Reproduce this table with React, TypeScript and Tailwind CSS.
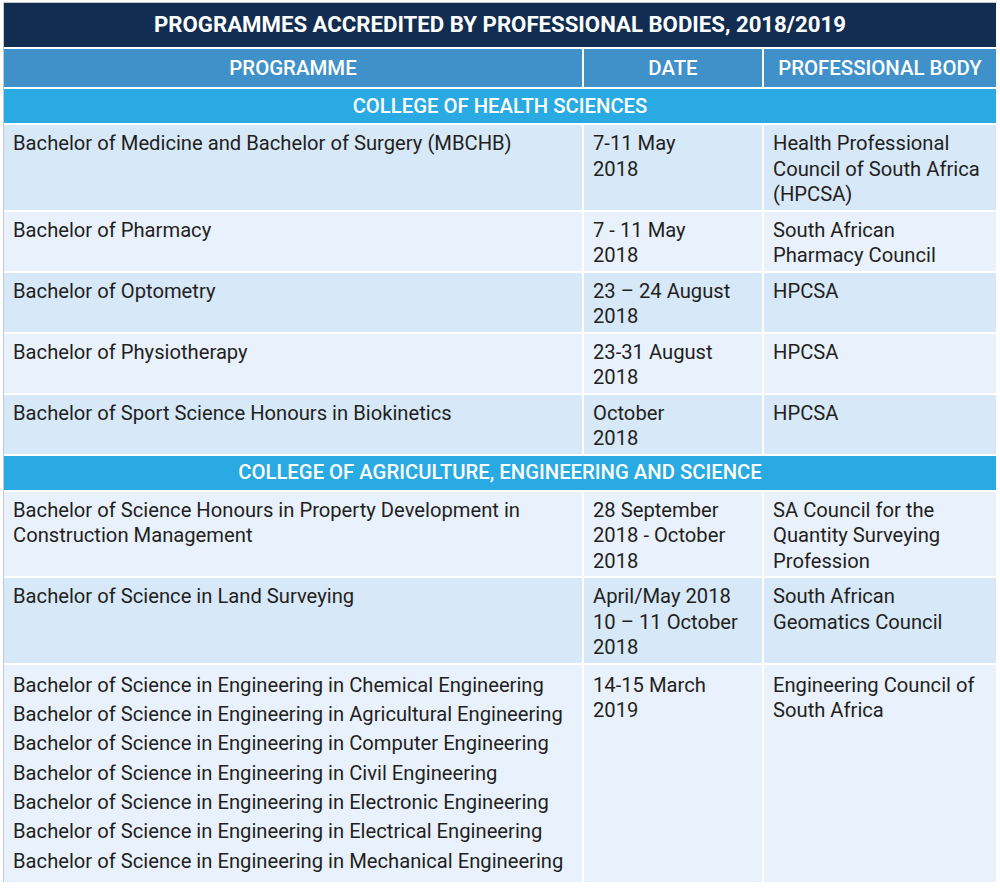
import React from "react";

const font = { fontFamily: "Roboto, 'Open Sans', sans-serif" };

type Row = { prog: string[]; date: string[]; body: string[]; dark: boolean };

const health: Row[] = [
  { prog: ["Bachelor of Medicine and Bachelor of Surgery (MBCHB)"], date: ["7-11 May", "2018"], body: ["Health Professional", "Council of South Africa", "(HPCSA)"], dark: true },
  { prog: ["Bachelor of Pharmacy"], date: ["7 - 11 May", "2018"], body: ["South African", "Pharmacy Council"], dark: false },
  { prog: ["Bachelor of Optometry"], date: ["23 – 24 August", "2018"], body: ["HPCSA"], dark: true },
  { prog: ["Bachelor of Physiotherapy"], date: ["23-31 August", "2018"], body: ["HPCSA"], dark: false },
  { prog: ["Bachelor of Sport Science Honours in Biokinetics"], date: ["October", "2018"], body: ["HPCSA"], dark: true },
];

const agri: Row[] = [
  { prog: ["Bachelor of Science Honours in Property Development in", "Construction Management"], date: ["28 September", "2018 - October", "2018"], body: ["SA Council for the", "Quantity Surveying", "Profession"], dark: false },
  { prog: ["Bachelor of Science in Land Surveying"], date: ["April/May 2018", "10 – 11 October", "2018"], body: ["South African", "Geomatics Council"], dark: true },
];

const eng = [
  "Bachelor of Science in Engineering in Chemical Engineering",
  "Bachelor of Science in Engineering in Agricultural Engineering",
  "Bachelor of Science in Engineering in Computer Engineering",
  "Bachelor of Science in Engineering in Civil Engineering",
  "Bachelor of Science in Engineering in Electronic Engineering",
  "Bachelor of Science in Engineering in Electrical Engineering",
  "Bachelor of Science in Engineering in Mechanical Engineering",
];

function Cell({ lines, dark }: { lines: string[]; dark: boolean }) {
  return (
    <div className={`${dark ? "bg-[#d7e8f8]" : "bg-[#e9f2fc]"} pl-[9px] pr-[4px] pt-[6px] pb-[2px] text-[20.2px] leading-[25.5px] text-[#231f20]`}>
      {lines.map((l, i) => (
        <div key={i} className="whitespace-nowrap">{l}</div>
      ))}
    </div>
  );
}

function DataRow({ r }: { r: Row }) {
  return (
    <>
      <Cell lines={r.prog} dark={r.dark} />
      <Cell lines={r.date} dark={r.dark} />
      <Cell lines={r.body} dark={r.dark} />
    </>
  );
}

function College({ name }: { name: string }) {
  return (
    <div className="col-span-3 flex h-[34px] items-center justify-center bg-[#29aae2] text-[20.3px] font-medium text-white">
      {name}
    </div>
  );
}

export default function App() {
  return (
    <div className="min-h-[889px] bg-white" style={font}>
      <div className="ml-[3px] pt-[2px]">
        <div className="w-[994px] border-l border-t border-[#c6c9cc]">
          <div className="grid grid-cols-[578px_178px_232px] gap-[2px]">
            <div className="col-span-3 flex h-[44px] items-center justify-center bg-[#112d52] text-[22.2px] font-bold text-white">
              PROGRAMMES ACCREDITED BY PROFESSIONAL BODIES, 2018/2019
            </div>
            {["PROGRAMME", "DATE", "PROFESSIONAL BODY"].map((h) => (
              <div key={h} className="flex h-[38px] items-center justify-center bg-[#4091c9] text-[20.4px] font-medium text-white">
                {h}
              </div>
            ))}
            <College name="COLLEGE OF HEALTH SCIENCES" />
            {health.map((r, i) => (
              <DataRow key={i} r={r} />
            ))}
            <College name="COLLEGE OF AGRICULTURE, ENGINEERING AND SCIENCE" />
            {agri.map((r, i) => (
              <DataRow key={i} r={r} />
            ))}
            <div className="flex flex-col gap-[3.9px] bg-[#e9f2fc] pl-[9px] pt-[8px] pb-[8px] text-[20.2px] leading-[25.5px] text-[#231f20]">
              {eng.map((l) => (
                <div key={l} className="whitespace-nowrap">{l}</div>
              ))}
            </div>
            <div className="bg-[#e9f2fc] pl-[9px] pt-[8px] text-[20.2px] leading-[25.5px] text-[#231f20]">
              <div>14-15 March</div>
              <div>2019</div>
            </div>
            <div className="bg-[#e9f2fc] pl-[9px] pt-[8px] text-[20.2px] leading-[25.5px] text-[#231f20]">
              <div>Engineering Council of</div>
              <div>South Africa</div>
            </div>
          </div>
        </div>
      </div>
    </div>
  );
}
